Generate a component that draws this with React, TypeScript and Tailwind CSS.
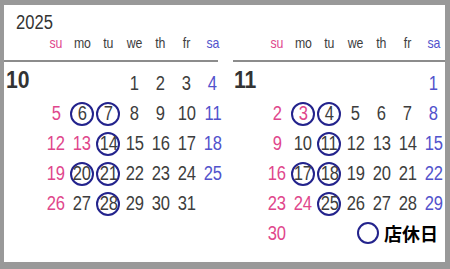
const weekdays = [
  { label: "su", color: "text-[#e0468c]" },
  { label: "mo", color: "text-[#3d3d3d]" },
  { label: "tu", color: "text-[#3d3d3d]" },
  { label: "we", color: "text-[#3d3d3d]" },
  { label: "th", color: "text-[#3d3d3d]" },
  { label: "fr", color: "text-[#3d3d3d]" },
  { label: "sa", color: "text-[#5252cc]" },
];

type Month = {
  label: string;
  firstDay: number; // 0 = sunday
  days: number;
  holidays: number[];
  closed: number[];
};

const october: Month = {
  label: "10",
  firstDay: 3,
  days: 31,
  holidays: [13],
  closed: [6, 7, 14, 20, 21, 28],
};

const november: Month = {
  label: "11",
  firstDay: 6,
  days: 30,
  holidays: [3, 24],
  closed: [3, 4, 11, 17, 18, 25],
};

const DayCell = ({ day, col, month }: { day: number; col: number; month: Month }) => {
  const red = col === 0 || month.holidays.includes(day);
  const blue = col === 6 && !red;
  const color = red ? "text-[#e0468c]" : blue ? "text-[#5252cc]" : "text-[#3d3d3d]";
  return (
    <div className="relative flex h-[30px] items-center justify-center">
      {month.closed.includes(day) && (
        <span className="absolute left-1/2 top-1/2 h-[24px] w-[24px] -translate-x-1/2 -translate-y-1/2 rounded-full border-2 border-[#23238c]" />
      )}
      <span className={`relative inline-block scale-x-[0.85] text-[19.5px] leading-none ${color}`}>
        {day}
      </span>
    </div>
  );
};

// one month block: weekday header, rule, month number and day grid
const MonthBlock = ({
  month,
  year,
  labelWidth,
  legend,
}: {
  month: Month;
  year?: string;
  labelWidth: string;
  legend?: boolean;
}) => {
  const cells: (number | null)[] = [];
  for (let i = 0; i < month.firstDay; i++) cells.push(null);
  for (let d = 1; d <= month.days; d++) cells.push(d);

  return (
    <div className="flex shrink-0 flex-col">
      <div className="h-[26px] pl-[12px] pt-[7px]">
        {year && (
          <span className="inline-block origin-left scale-x-[0.85] text-[19.5px] leading-none text-[#333]">
            {year}
          </span>
        )}
      </div>
      <div className="flex h-[29px] pt-[4px]">
        <div className={labelWidth} />
        <div className="grid w-[183px] grid-cols-7">
          {weekdays.map((w) => (
            <div key={w.label} className="flex justify-center">
              <span className={`inline-block scale-x-[0.82] text-[15px] leading-none ${w.color}`}>
                {w.label}
              </span>
            </div>
          ))}
        </div>
      </div>
      <div className="h-[2px] w-[214px] bg-[#8c8c8c]" />
      <div className="flex pt-[7px]">
        <div className={labelWidth}>
          <span className="inline-block origin-left scale-x-[0.92] text-[23px] font-bold leading-none text-[#333]">
            {month.label}
          </span>
        </div>
        <div className="grid w-[183px] grid-cols-7 items-start">
          {cells.map((day, i) =>
            day === null ? (
              <div key={`e${i}`} className="h-[30px]" />
            ) : (
              <DayCell key={day} day={day} col={i % 7} month={month} />
            )
          )}
          {legend && (
            <div className="col-span-6 flex items-center justify-end gap-[5px] pr-[9px] pt-[3px]">
              <span className="h-[22px] w-[22px] rounded-full border-2 border-[#23238c]" />
              <span className="text-[18px] font-bold leading-none text-black [font-family:'Noto_Sans_CJK_JP','Noto_Sans_CJK_SC',sans-serif]">
                店休日
              </span>
            </div>
          )}
        </div>
      </div>
    </div>
  );
};

export default function App() {
  return (
    <div className="h-[269px] w-[450px] bg-[#999999] pl-[4px] pt-[5px] font-['Liberation_Sans',Arial,sans-serif]">
      <div className="flex h-[257px] w-[441px] overflow-hidden bg-white">
        <div className="w-[222px] shrink-0">
          <MonthBlock month={october} year="2025" labelWidth="w-[39px] shrink-0 pl-[2px]" />
        </div>
        <div className="ml-[7px] shrink-0">
          <MonthBlock month={november} labelWidth="w-[31px] shrink-0 pl-[1px]" legend />
        </div>
      </div>
    </div>
  );
}
